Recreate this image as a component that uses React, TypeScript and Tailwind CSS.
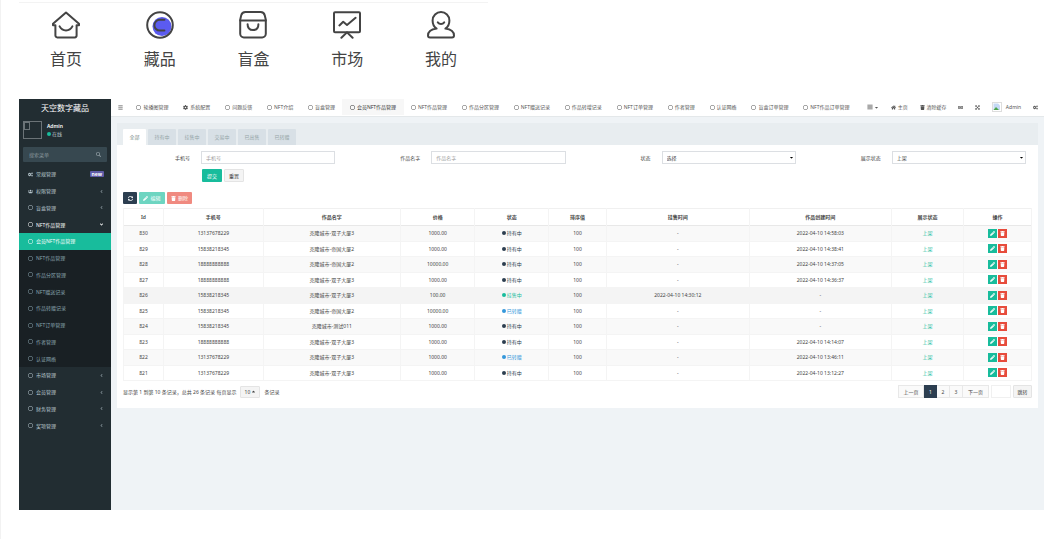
import { ReactNode } from "react";
import { clsx } from "clsx";
import {
  FaAngleDown,
  FaAngleLeft,
  FaBars,
  FaCaretDown,
  FaCaretUp,
  FaCog,
  FaCogs,
  FaExpandArrowsAlt,
  FaHome,
  FaLanguage,
  FaPencilAlt,
  FaRegCircle,
  FaSearch,
  FaSyncAlt,
  FaTrash,
  FaUsers,
} from "react-icons/fa";

type Status = "持有中" | "挂售中" | "已转赠";

interface Row {
  id: number;
  phone: string;
  name: string;
  price: string;
  status: Status;
  soldAt: string;
  createdAt: string;
}

const mobileTabs: { label: string; icon: ReactNode }[] = [
  {
    label: "首页",
    icon: (
      <>
        <path d="M14 1.500 1 12.800v1.400h2.400v10.400a1.800 1.800 0 0 0 1.800 1.800h17.600a1.800 1.800 0 0 0 1.800-1.800V14.200H27v-1.400Z" />
        <path d="M7.600 15.400c1.400 2.600 3.600 4 6.400 4s5-1.400 6.400-4" />
      </>
    ),
  },
  {
    label: "藏品",
    icon: (
      <>
        <circle cx="16" cy="15.5" r="9.5" fill="#5b5bf0" stroke="none" />
        <circle cx="14" cy="14" r="12.8" />
        <path d="M18.4 8.800h-4.600a5.400 5.400 0 0 0 0 10.800h4.600" />
      </>
    ),
  },
  {
    label: "盲盒",
    icon: (
      <>
        <path d="M1.200 8.800 2.200 4.400C2.800 2 4 1 6.400 1h15.200c2.400 0 3.600 1 4.200 3.400l1 4.400v14a3.700 3.700 0 0 1-3.700 3.700H4.900a3.700 3.700 0 0 1-3.700-3.700Z" />
        <path d="M1.200 9.600h25.600M8.600 13.200c0 3.600 2 5.800 5.400 5.800s5.400-2.200 5.400-5.800" />
      </>
    ),
  },
  {
    label: "市场",
    icon: (
      <>
        <rect x="1" y="1.200" width="26" height="20" rx="1" />
        <path d="m6.400 14.400 3.800-3.600 3.800 3.200 8.600-7.200M14 21.400l-5.600 5.400M14 21.400l5.600 5.400" />
      </>
    ),
  },
  {
    label: "我的",
    icon: (
      <>
        <path d="M9.600 17.600C7 15.800 5.600 12.800 5.600 9.400a8.400 8.400 0 0 1 16.800 0c0 3.400-1.400 6.400-4 8.200 5.200.8 8.600 3.200 8.600 7 0 1.300-.8 2-2 2H3c-1.200 0-2-.7-2-2 0-3.800 3.400-6.200 8.600-7Z" />
        <path d="M10.800 11.400c.8 1.100 1.800 1.600 3.200 1.600s2.400-.5 3.200-1.600" />
      </>
    ),
  },
];

const topTabs = [
  "轮播图管理",
  "系统配置",
  "问题反馈",
  "NFT介绍",
  "盲盒管理",
  "会员NFT作品管理",
  "NFT作品管理",
  "作品分区管理",
  "NFT赠送记录",
  "作品转增记录",
  "NFT订单管理",
  "作者管理",
  "认证网络",
  "盲盒订单管理",
  "NFT作品订单管理",
];

const subMenu = [
  "会员NFT作品管理",
  "NFT作品管理",
  "作品分区管理",
  "NFT赠送记录",
  "作品转赠记录",
  "NFT订单管理",
  "作者管理",
  "认证网络",
];
const menuAfter = ["市场管理", "会员管理", "财务管理", "奖项管理"];

const filterTabs = ["全部", "持有中", "挂售中", "交易中", "已出售", "已转赠"];

const columns = [
  { label: "Id", width: "w-[4.4%]" },
  { label: "手机号", width: "w-[11%]" },
  { label: "作品名字", width: "w-[15.1%]" },
  { label: "价格", width: "w-[8.2%]" },
  { label: "状态", width: "w-[8.1%]" },
  { label: "排序值", width: "w-[6.4%]" },
  { label: "挂售时间", width: "w-[15.7%]" },
  { label: "作品创建时间", width: "w-[15.7%]" },
  { label: "展示状态", width: "w-[7.9%]" },
  { label: "操作", width: "w-[7.5%]" },
];

const rows: Row[] = [
  { id: 830, phone: "13137678229", name: "克隆城市-双子大厦3", price: "1000.00", status: "持有中", soldAt: "-", createdAt: "2022-04-10 14:58:03" },
  { id: 829, phone: "15838218345", name: "克隆城市-帝国大厦2", price: "1000.00", status: "持有中", soldAt: "-", createdAt: "2022-04-10 14:38:41" },
  { id: 828, phone: "18888888888", name: "克隆城市-帝国大厦2", price: "10000.00", status: "持有中", soldAt: "-", createdAt: "2022-04-10 14:37:05" },
  { id: 827, phone: "18888888888", name: "克隆城市-双子大厦3", price: "1000.00", status: "持有中", soldAt: "-", createdAt: "2022-04-10 14:36:37" },
  { id: 826, phone: "15838218345", name: "克隆城市-双子大厦3", price: "100.00", status: "挂售中", soldAt: "2022-04-10 14:30:12", createdAt: "-" },
  { id: 825, phone: "15838218345", name: "克隆城市-帝国大厦2", price: "10000.00", status: "已转赠", soldAt: "-", createdAt: "-" },
  { id: 824, phone: "15838218345", name: "克隆城市-测试011", price: "1000.00", status: "持有中", soldAt: "-", createdAt: "-" },
  { id: 823, phone: "18888888888", name: "克隆城市-双子大厦3", price: "1000.00", status: "持有中", soldAt: "-", createdAt: "2022-04-10 14:14:07" },
  { id: 822, phone: "13137678229", name: "克隆城市-双子大厦3", price: "1000.00", status: "已转赠", soldAt: "-", createdAt: "2022-04-10 13:46:11" },
  { id: 821, phone: "13137678229", name: "克隆城市-双子大厦3", price: "1000.00", status: "持有中", soldAt: "-", createdAt: "2022-04-10 13:12:27" },
];

const statusColor: Record<Status, string> = {
  持有中: "text-[#2c3e50]",
  挂售中: "text-[#18bc9c]",
  已转赠: "text-[#3498db]",
};

const MobileNav = () => (
  <nav className="grid w-[469px] max-w-full grid-cols-5 border-t border-[#f3f3f3] pt-2">
    {mobileTabs.map((tab) => (
      <a key={tab.label} href="#" className="flex flex-col items-center gap-2 text-[16px] leading-6 text-[#444]">
        <svg viewBox="0 0 28 28" className="h-7 w-7 fill-none stroke-[#444] stroke-2 [stroke-linecap:round] [stroke-linejoin:round]">
          {tab.icon}
        </svg>
        {tab.label}
      </a>
    ))}
  </nav>
);

interface MenuItemProps {
  label: string;
  icon?: ReactNode;
  extra?: ReactNode;
  className?: string;
}

const MenuItem = ({ label, icon = <FaRegCircle />, extra, className }: MenuItemProps) => (
  <a href="#" className={clsx("flex items-center gap-[3px] pr-[7px] pl-[9px]", className)}>
    <span className="flex w-[5px] shrink-0 justify-center">{icon}</span>
    <span className="grow whitespace-nowrap">{label}</span>
    {extra}
  </a>
);

const ClosedArrow = () => <FaAngleLeft className="opacity-60" />;

const Sidebar = () => (
  <aside className="w-[92px] shrink-0 bg-[#222d32] text-[#b8c7ce]">
    <h1 className="h-[18px] text-center text-[8px] leading-[17px] text-white">天空数字藏品</h1>
    <div className="flex gap-[5px] px-1 pt-1">
      <div className="h-[18px] w-[19px] border border-[#6b7377]">
        <div className="h-2 w-1.5 border border-[#6b7377]" />
      </div>
      <div className="pt-px leading-[8px]">
        <p className="font-semibold text-white">Admin</p>
        <p className="flex items-center gap-px">
          <span className="h-1 w-1 rounded-full bg-[#18bc9c]" />
          在线
        </p>
      </div>
    </div>
    <form className="mx-1 mt-2 flex h-[15px] items-center rounded-[1px] bg-[#374850] px-1.5">
      <input
        type="search"
        aria-label="搜索菜单"
        placeholder="搜索菜单"
        className="min-w-0 grow outline-none placeholder:text-[#8a979d]"
      />
      <button type="submit" aria-label="搜索" className="text-[#8a979d]">
        <FaSearch />
      </button>
    </form>
    <nav className="mt-1 grid h-[268px] grid-rows-16">
      <MenuItem
        label="常规管理"
        icon={<FaCogs />}
        extra={<span className="rounded-[1px] bg-[#605ca8] px-0.5 leading-[6px] font-bold text-white">new</span>}
      />
      <MenuItem label="权限管理" icon={<FaUsers />} extra={<ClosedArrow />} />
      <MenuItem label="盲盒管理" extra={<ClosedArrow />} />
      <MenuItem label="NFT作品管理" extra={<FaAngleDown />} className="text-white" />
      {subMenu.map((label, i) => (
        <MenuItem
          key={label}
          label={label}
          className={i === 0 ? "bg-[#18bc9c] text-white" : "bg-[#192024] text-[#8aa4af]"}
        />
      ))}
      {menuAfter.map((label) => (
        <MenuItem key={label} label={label} extra={<ClosedArrow />} />
      ))}
    </nav>
  </aside>
);

const TopBar = () => (
  <header className="flex h-[18px] items-stretch border-b border-[#e4e8ea] bg-white pb-px whitespace-nowrap text-[#555]">
    <button aria-label="菜单" className="w-[18px] pl-[7px]">
      <FaBars />
    </button>
    <nav className="flex grow">
      {topTabs.map((label, i) => (
        <a
          key={label}
          href="#"
          className={clsx(
            "flex flex-auto items-center justify-center gap-0.5",
            label === "会员NFT作品管理" && "bg-[#f7f7f7] text-[#333]"
          )}
        >
          {i === 1 ? <FaCog /> : <FaRegCircle />}
          {label}
        </a>
      ))}
    </nav>
    <div className="flex w-[187px] items-center justify-between pr-[6px] pl-[10px]">
      <button aria-label="标签" className="flex items-center gap-px">
        <FaBars className="h-1.5 w-1.5" />
        <FaCaretDown />
      </button>
      <a href="#" className="flex items-center gap-0.5">
        <FaHome />
        主页
      </a>
      <a href="#" className="flex items-center gap-0.5">
        <FaTrash />
        清除缓存
      </a>
      <button aria-label="语言">
        <FaLanguage />
      </button>
      <button aria-label="全屏">
        <FaExpandArrowsAlt />
      </button>
      <a href="#" className="flex items-center gap-1">
        <svg viewBox="0 0 10 10" className="h-2.5 w-2.5">
          <rect x=".5" y=".5" width="9" height="9" fill="#fff" stroke="#ddd" />
          <path d="M1.500 1.500h4.500l2 2v4.500h-6.500Z" fill="#c5d9f5" />
          <path d="m1.500 8 2.500-3 3 3Z" fill="#4ca64c" />
        </svg>
        Admin
      </a>
      <button aria-label="设置">
        <FaCogs />
      </button>
    </div>
  </header>
);

const fieldClass = "h-[13px] min-w-0 grow border border-[#dcdfe3] bg-white px-1";

const Field = ({ id, label, children }: { id: string; label: string; children: ReactNode }) => (
  <div className="flex items-center gap-[11px] pr-3">
    <label htmlFor={id} className="w-[73px] shrink-0 text-right">
      {label}
    </label>
    {children}
  </div>
);

const SelectField = ({ id, label, option }: { id: string; label: string; option: string }) => (
  <Field id={id} label={label}>
    <div className="relative flex min-w-0 grow">
      <select id={id} className={clsx(fieldClass, "appearance-none")}>
        <option>{option}</option>
      </select>
      <FaCaretDown className="pointer-events-none absolute top-1 right-0.5 text-black" />
    </div>
  </Field>
);

const Filters = () => (
  <form className="pt-1.5">
    <div className="grid grid-cols-4">
      <Field id="phone" label="手机号">
        <input id="phone" placeholder="手机号" className={clsx(fieldClass, "placeholder:text-[#999]")} />
      </Field>
      <Field id="name" label="作品名字">
        <input id="name" placeholder="作品名字" className={clsx(fieldClass, "placeholder:text-[#999]")} />
      </Field>
      <SelectField id="status" label="状态" option="选择" />
      <SelectField id="display" label="展示状态" option="上架" />
    </div>
    <div className="mt-[5px] flex gap-0.5 pl-[85px]">
      <button type="submit" className="h-[13px] w-5 rounded-[1px] bg-[#18bc9c] text-white">
        提交
      </button>
      <button type="reset" className="h-[13px] w-5 rounded-[1px] border border-[#e4e4e4] bg-[#f4f4f4]">
        重置
      </button>
    </div>
  </form>
);

const Toolbar = () => (
  <div className="mt-[10px] flex gap-0.5 text-white">
    <button aria-label="刷新" className="flex h-3 w-3.5 items-center justify-center rounded-[1px] bg-[#2c3e50]">
      <FaSyncAlt />
    </button>
    <button className="flex h-3 w-[26px] items-center justify-center gap-0.5 rounded-[1px] bg-[#6dd5c1]">
      <FaPencilAlt />
      编辑
    </button>
    <button className="flex h-3 w-[25px] items-center justify-center gap-0.5 rounded-[1px] bg-[#f08a80]">
      <FaTrash />
      删除
    </button>
  </div>
);

const DataTable = () => (
  <table className="mt-1 h-[173px] w-full table-fixed border-collapse text-center whitespace-nowrap">
    <thead>
      <tr className="h-[17px] border-t border-b border-[#f0f0f0] border-b-[#e8e8e8]">
        {columns.map((col) => (
          <th key={col.label} className={clsx(col.width, "border-x border-[#f4f4f4] font-semibold")}>
            {col.label}
          </th>
        ))}
      </tr>
    </thead>
    <tbody>
      {rows.map((row) => (
        <tr
          key={row.id}
          className={clsx(
            "border-b border-[#f4f4f4] [&>td]:border-x [&>td]:border-[#f4f4f4]",
            row.id === 826 ? "bg-[#f4f4f4]" : "odd:bg-[#f9f9f9]"
          )}
        >
          <td>{row.id}</td>
          <td>{row.phone}</td>
          <td>{row.name}</td>
          <td>{row.price}</td>
          <td>
            <span className={clsx("inline-flex items-center gap-px", statusColor[row.status])}>
              <span className="h-1 w-1 rounded-full bg-current" />
              {row.status}
            </span>
          </td>
          <td>100</td>
          <td>{row.soldAt}</td>
          <td>{row.createdAt}</td>
          <td className="text-[#18bc9c]">上架</td>
          <td>
            <div className="flex justify-center gap-px text-white">
              <button aria-label="编辑" className="flex h-[9px] w-[9px] items-center justify-center bg-[#18bc9c]">
                <FaPencilAlt />
              </button>
              <button aria-label="删除" className="flex h-[9px] w-[9px] items-center justify-center bg-[#e74c3c]">
                <FaTrash />
              </button>
            </div>
          </td>
        </tr>
      ))}
    </tbody>
  </table>
);

const pageClass = "h-[13px] border-y border-r border-[#e8e8e8] bg-[#fafafa]";

const Pagination = () => (
  <div className="flex items-center justify-between pt-1">
    <div className="flex items-center gap-1">
      显示第 1 到第 10 条记录，总共 26 条记录 每页显示
      <button className="flex h-3 w-5 items-center justify-center gap-px rounded-[1px] border border-[#e4e4e4] bg-[#f4f4f4]">
        10
        <FaCaretUp />
      </button>
      条记录
    </div>
    <div className="flex">
      <button className={clsx(pageClass, "w-[26px] border-l")}>上一页</button>
      <button className="h-[13px] w-[13px] bg-[#2c3e50] text-white">1</button>
      <button className={clsx(pageClass, "w-[13px]")}>2</button>
      <button className={clsx(pageClass, "w-[13px]")}>3</button>
      <button className={clsx(pageClass, "w-[26px]")}>下一页</button>
      <input aria-label="页码" className="ml-0.5 h-[13px] w-5 border border-[#f0f0f0]" />
      <button className="ml-0.5 h-[13px] w-[19px] rounded-[1px] border border-[#e4e4e4] bg-[#f4f4f4]">跳转</button>
    </div>
  </div>
);

export default function App() {
  return (
    <div className="min-h-screen border-l border-[#f2f2f2] bg-white pt-0.5 pr-4 pb-[29px] pl-[18px] font-['Noto_Sans','Noto_Sans_CJK_SC',sans-serif]">
      <MobileNav />
      <div className="mt-7 flex text-[5px] leading-[8px] text-[#444]">
        <Sidebar />
        <div className="min-w-0 grow bg-[#eff3f6] pb-[102px]">
          <TopBar />
          <main className="mx-1.5 mt-1.5 bg-white pb-2.5">
            <div className="flex h-[22px] items-end gap-0.5 bg-[#e8edf0] pl-1.5">
              {filterTabs.map((label, i) => (
                <button
                  key={label}
                  className={clsx(
                    "h-4 rounded-t-[1px]",
                    i === 0 ? "w-[23px] bg-white text-[#7b8a8b]" : "w-7 bg-[#d8e0e6] text-[#95a5a6]"
                  )}
                >
                  {label}
                </button>
              ))}
            </div>
            <Filters />
            <div className="px-1.5">
              <Toolbar />
              <DataTable />
              <Pagination />
            </div>
          </main>
        </div>
      </div>
    </div>
  );
}
